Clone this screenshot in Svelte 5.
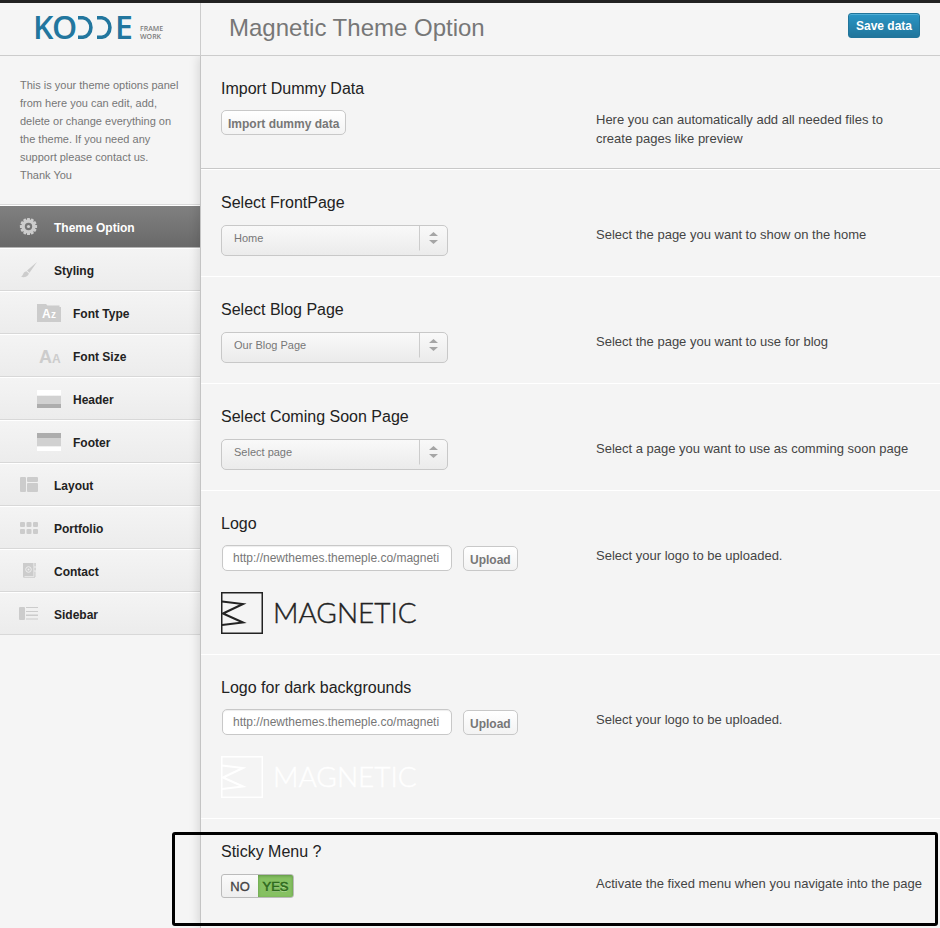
<script>
  const nav = [
    { label: 'Theme Option', icon: 'gear', active: true },
    { label: 'Styling', icon: 'brush' },
    { label: 'Font Type', icon: 'type', sub: true },
    { label: 'Font Size', icon: 'size', sub: true },
    { label: 'Header', icon: 'header', sub: true },
    { label: 'Footer', icon: 'footer', sub: true },
    { label: 'Layout', icon: 'layout' },
    { label: 'Portfolio', icon: 'grid' },
    { label: 'Contact', icon: 'contact' },
    { label: 'Sidebar', icon: 'sidebar' }
  ];
  const selects = [
    { id: 'front', title: 'Select FrontPage', value: 'Home', help: 'Select the page you want to show on the home' },
    { id: 'blog', title: 'Select Blog Page', value: 'Our Blog Page', help: 'Select the page you want to use for blog' },
    { id: 'soon', title: 'Select Coming Soon Page', value: 'Select page', help: 'Select a page you want to use as comming soon page' }
  ];
  const logos = [
    { id: 'logo', title: 'Logo', color: '#222222' },
    { id: 'logo-dark', title: 'Logo for dark backgrounds', color: '#ffffff' }
  ];
  const teeth = [0, 30, 60, 90, 120, 150, 180, 210, 240, 270, 300, 330];
  let urls = $state(['http://newthemes.themeple.co/magneti', 'http://newthemes.themeple.co/magneti']);
  let sticky = $state('yes');
</script>

{#snippet icon(name)}
  <svg class="icon" width="24" height="20" viewBox="0 0 24 20" fill="#cccccc" aria-hidden="true">
    {#if name === 'gear'}
      <g transform="translate(10.5 9.5)">
        {#each teeth as a}
          <rect x="-1.5" y="-8.6" width="3" height="4" rx="0.6" transform="rotate({a})" />
        {/each}
        <path fill-rule="evenodd" d="M0-7A7 7 0 1 1 0 7A7 7 0 1 1 0-7ZM0-3.7A3.7 3.7 0 1 0 0 3.7A3.7 3.7 0 1 0 0-3.7Z" />
        <circle r="1.6" />
      </g>
    {:else if name === 'brush'}
      <path d="M19 2L11.5 12.8L9 10.6Z M8.4 11.2L10.9 13.4C10.4 16.5 6 18 3 16.8C5.6 15.6 4.6 12 8.4 11.2Z" />
    {:else if name === 'type'}
      <path d="M0 1H9L10.5 2.5H22.500V4H24V19H0Z" />
      <text x="5" y="15" font-size="12" font-weight="700" fill="#ffffff">A</text>
      <text x="14" y="15" font-size="10" font-weight="700" fill="#ffffff">z</text>
    {:else if name === 'size'}
      <text x="2" y="17" font-size="18" font-weight="700">A</text>
      <text x="15" y="17" font-size="12" font-weight="700">A</text>
    {:else if name === 'header'}
      <path fill="#ffffff" d="M0 1H24V6H0Z" />
      <path fill="#d1d1d1" d="M0 7H24V15H0Z" />
      <path fill="#adadad" d="M0 15H24V19H0Z" />
    {:else if name === 'footer'}
      <path fill="#adadad" d="M0 1H24V6H0Z" />
      <path fill="#d1d1d1" d="M0 6H24V14H0Z" />
      <path fill="#ffffff" d="M0 15H24V19H0Z" />
    {:else if name === 'layout'}
      <rect x="2" y="2" width="6" height="15" rx="1" />
      <rect x="9" y="2" width="11" height="5" rx="1" />
      <rect x="9" y="8" width="11" height="9" rx="1" />
    {:else if name === 'grid'}
      {#each [2, 8.5, 15] as x}
        <rect {x} y="4" width="5" height="5" rx="1" />
        <rect {x} y="11" width="5" height="5" rx="1" />
      {/each}
    {:else if name === 'contact'}
      <path d="M5 2H15.500V15H6.500V15.800H17V16.800H6Q5 16.800 5 15.500Z M16.300 2H17.800V5.500H16.300Z M16.300 6.500H17.800V9.500H16.300Z M16.300 10.500H17.500V16H16.300Z" />
      <circle cx="10.500" cy="8.500" r="2.800" fill="none" stroke="#eeeeee" />
      <circle cx="10.500" cy="8.500" r="1" fill="#eeeeee" />
    {:else}
      <rect x="1" y="3" width="6" height="13" rx="1" />
      <path d="M8 3H20V4H8Z M8 7H20V8H8Z M8 10.500H20V12H8Z M8 14.500H20V15.500H8Z" />
    {/if}
  </svg>
{/snippet}

<div class="page">
  <header class="top">
    <a class="brand" href="#home" aria-label="Kodde Framework">
      <svg width="132" height="28" viewBox="0 0 132 28">
        <g fill="#22769e" font-weight="600" font-size="32">
          <text x="-1" y="25">K</text>
          <text x="18" y="25">O</text>
          <text x="81" y="25">E</text>
        </g>
        <path d="M44 3.800H49A8.800 9.800 0 0 1 49 23.300H44 M63 3.800H68A8.800 9.800 0 0 1 68 23.300H63" fill="none" stroke="#22769e" stroke-width="3.600" />
        <g fill="#7d7d7d" font-size="7" font-weight="600">
          <text x="106" y="17">FRAME</text>
          <text x="106" y="25">WORK</text>
        </g>
      </svg>
    </a>
    <div class="bar">
      <h1>Magnetic Theme Option</h1>
      <button class="save" type="button">Save data</button>
    </div>
  </header>

  <div class="body">
    <aside>
      <p class="intro">This is your theme options panel from here you can edit, add, delete or change everything on the theme. If you need any support please contact us. Thank You</p>
      <nav>
        {#each nav as item}
          <a href="#{item.icon}" class:active={item.active} class:sub={item.sub}>
            {@render icon(item.icon)}
            <span>{item.label}</span>
          </a>
        {/each}
      </nav>
    </aside>

    <main>
      <section class="import">
        <div>
          <h2>Import Dummy Data</h2>
          <button class="btn" type="button">Import dummy data</button>
        </div>
        <p>Here you can automatically add all needed files to create pages like preview</p>
      </section>

      {#each selects as s}
        <section>
          <div>
            <h2><label for={s.id}>{s.title}</label></h2>
            <div class="select">
              <select id={s.id}><option>{s.value}</option></select>
              <svg width="28" height="25" viewBox="0 0 28 25" aria-hidden="true">
                <path d="M0.500 0V24.500" stroke="#cccccc" />
                <path d="M10 10L14.500 6L19 10Z M10 14L14.500 18L19 14Z" fill="#a5a5a5" />
              </svg>
            </div>
          </div>
          <p>{s.help}</p>
        </section>
      {/each}

      {#each logos as l, i}
        <section>
          <div>
            <h2><label for={l.id}>{l.title}</label></h2>
            <div class="upload">
              <input id={l.id} type="text" bind:value={urls[i]} />
              <button class="btn" type="button">Upload</button>
            </div>
            <svg class="logo" width="210" height="42" viewBox="0 0 210 42">
              <g fill="none" stroke={l.color}>
                <rect x="0.750" y="0.750" width="40.500" height="40.500" stroke-width="1.500" />
                <path d="M1 9.500L22 12L2 21.500L22 30.500L1 33" stroke-width="2" />
              </g>
              <text x="52" y="31" fill={l.color} stroke={l.color} stroke-width="0.400" font-size="28">MAGNETIC</text>
            </svg>
          </div>
          <p>Select your logo to be uploaded.</p>
        </section>
      {/each}

      <section class="sticky">
        <div>
          <h2 id="sticky-title">Sticky Menu ?</h2>
          <div class="toggle" role="radiogroup" aria-labelledby="sticky-title">
            <label class:on={sticky === 'no'}><input type="radio" name="sticky" value="no" bind:group={sticky} />NO</label>
            <label class:on={sticky === 'yes'}><input type="radio" name="sticky" value="yes" bind:group={sticky} />YES</label>
          </div>
        </div>
        <p>Activate the fixed menu when you navigate into the page</p>
        <span class="highlight"></span>
      </section>
    </main>
  </div>
</div>

<style>
  :global(body) { margin: 0; background: #f5f5f5; }
  .page {
    font-family: "Liberation Sans", Arial, sans-serif;
    min-height: 100vh;
    display: flex;
    flex-direction: column;
    border-top: 3px solid #222222;
    box-sizing: border-box;
    color: #222222;
  }
  h1, h2, p { margin: 0; font-weight: 400; }
  button, input, select { font-family: inherit; box-sizing: border-box; }

  .top {
    display: flex;
    height: 52px;
    border-bottom: 1px solid #cccccc;
    background: #f5f5f5;
    position: relative;
    z-index: 2;
  }
  .brand { width: 200px; flex: none; box-sizing: border-box; padding: 11px 0 0 34px; }
  .brand svg { display: block; overflow: visible; font-family: "Open Sans", sans-serif; }
  .bar {
    flex: 1;
    display: flex;
    align-items: center;
    justify-content: space-between;
    border-left: 1px solid #cccccc;
    padding: 0 20px 2px 28px;
  }
  h1 { font-size: 24px; line-height: 28px; color: #777777; }
  .save {
    height: 25px;
    margin-bottom: 6px;
    padding: 2px 7px 0;
    font-size: 12px;
    font-weight: 700;
    color: #ffffff;
    border: 1px solid #21759b;
    border-radius: 3px;
    background: linear-gradient(#2a95c5, #21759b);
    box-shadow: inset 0 1px 0 rgba(120, 200, 230, 0.5);
  }

  .body { flex: 1; display: flex; }
  aside { width: 200px; flex: none; }
  .intro {
    padding: 20px 20px 20px;
    font-size: 11px;
    line-height: 18px;
    color: #777777;
    border-bottom: 1px solid #dadada;
  }
  nav a {
    display: flex;
    align-items: center;
    gap: 12px;
    height: 41px;
    padding-left: 18px;
    font-size: 12px;
    font-weight: 700;
    color: #222222;
    text-decoration: none;
    border-top: 1px solid #ffffff;
    border-bottom: 1px solid #d8d8d8;
    background: linear-gradient(#f4f4f4, #ececec);
  }
  nav a span { padding-top: 2px; }
  nav .sub { padding-left: 37px; }
  nav .active {
    color: #ffffff;
    background: linear-gradient(#808080, #696969);
    border-bottom-color: #b5b5b5;
  }

  main {
    flex: 1;
    min-width: 0;
    position: relative;
    z-index: 1;
    background: #f4f4f4;
    border-left: 1px solid #c4c4c4;
    box-shadow: -1px 0 10px rgba(0, 0, 0, 0.14);
  }
  section {
    display: grid;
    grid-template-columns: 375px 1fr;
    padding: 23px 16px 20px 20px;
    border-bottom: 1px solid #ffffff;
  }
  h2 { font-size: 16px; line-height: 20px; margin-bottom: 11px; }
  section p { font-size: 13px; line-height: 19px; padding-top: 32px; color: #444444; }
  .import {
    border-bottom-color: #c8c8c8;
    box-shadow: 0 1px 0 #ffffff;
    margin-bottom: 1px;
  }
  .import p { max-width: 320px; padding-top: 31px; }

  .btn {
    height: 25px;
    padding: 2px 6px 0;
    font-size: 12px;
    font-weight: 700;
    color: #777777;
    border: 1px solid #c8c8c8;
    border-radius: 5px;
    background: linear-gradient(#ffffff, #f3f3f3);
  }
  .select { display: grid; width: 227px; margin-top: 12px; }
  .select select {
    grid-area: 1 / 1;
    appearance: none;
    height: 31px;
    padding: 0 40px 5px 12px;
    font-size: 11px;
    color: #777777;
    border: 1px solid #c8c8c8;
    border-radius: 5px;
    background: linear-gradient(#f9f9f9, #ebebeb);
  }
  .select svg { grid-area: 1 / 1; justify-self: end; margin: 1px 1px 0 0; pointer-events: none; }
  .upload { display: flex; align-items: flex-end; gap: 11px; padding-left: 1px; }
  .upload input {
    width: 230px;
    height: 26px;
    padding: 0 5px 0 10px;
    font-size: 12px;
    color: #777777;
    border: 1px solid #c8c8c8;
    border-radius: 5px;
    background: #ffffff;
    box-shadow: inset 0 1px 1px #eeeeee;
  }
  .logo { display: block; margin-top: 21px; font-family: Lato, sans-serif; font-weight: 300; }

  .sticky { position: relative; border-bottom: 0; padding-bottom: 30px; }
  .toggle {
    display: inline-flex;
    height: 22px;
    margin-top: 1px;
    border: 1px solid #bbbbbb;
    border-radius: 3px;
    overflow: hidden;
    font-size: 13px;
    line-height: 23px;
    color: #444444;
    background: linear-gradient(#fafafa, #eeeeee);
    -webkit-text-stroke: 0.3px currentColor;
  }
  .toggle label { width: 36px; text-align: center; }
  .toggle label + label { width: 35px; }
  .toggle .on {
    color: #2f6b1d;
    background: #86c162;
    box-shadow: inset 0 1px 3px #5f9344;
    text-shadow: 0 1px 0 #b5dd9c;
    -webkit-text-stroke: 0.6px currentColor;
  }
  .toggle input { position: absolute; opacity: 0; width: 1px; height: 1px; margin: 0; }
  .highlight {
    position: absolute;
    inset: 13px 2px 2px -29px;
    border: 3px solid #000000;
    border-radius: 3px;
    pointer-events: none;
  }
</style>
